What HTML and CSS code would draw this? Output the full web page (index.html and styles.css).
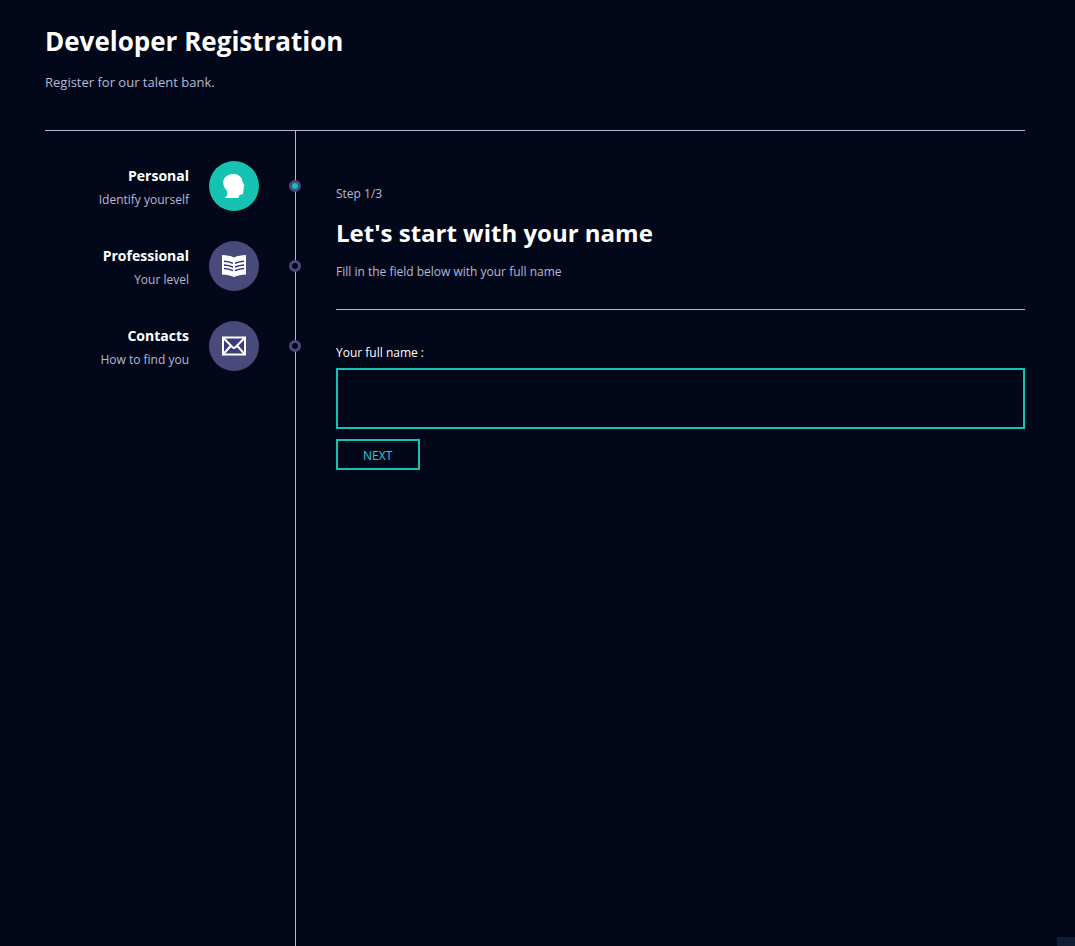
FILE: index.html
```html
<!DOCTYPE html>
<html lang="en">
<head>
<meta charset="utf-8">
<meta name="viewport" content="width=device-width, initial-scale=1">
<title>Developer Registration</title>
<link rel="stylesheet" href="styles.css">
</head>
<body>
<div class="container">
  <header class="header">
    <h1 class="header-title">Developer Registration</h1>
    <p class="header-text">Register for our talent bank.</p>
  </header>
  <div class="steps">
    <nav class="sidebar" aria-label="Steps">
      <a class="item active" href="#personal">
        <span class="info"><strong class="item-title">Personal</strong><span class="item-text">Identify yourself</span></span>
        <span class="icon">
          <svg viewBox="0 0 24 24" width="24" height="24" fill="#fff" aria-hidden="true"><path d="M11 0C5.500 0 1.200 3.600 1.200 8.600c0 3.600 1.800 6.400 4 8.400.8 2.800 0 5-2.400 7h13.600l1.200-3.200 3-.6.8-2.400-.2-2 .8-1-.4-2.200 1-.8-2-3.600C20.400 3.300 16.600 0 11 0z"/></svg>
        </span>
        <span class="point"></span>
      </a>
      <a class="item" href="#professional">
        <span class="info"><strong class="item-title">Professional</strong><span class="item-text">Your level</span></span>
        <span class="icon">
          <svg viewBox="0 0 24 24" width="24" height="24" aria-hidden="true"><path fill="#fff" d="M0 1c4.500.1 8.500.8 12 2.400C15.500 1.800 19.500 1.100 24 1v19.500c-4.500.1-8.500.8-12 2.500-3.500-1.700-7.500-2.400-12-2.500z"/><path fill="none" stroke="#2f2f78" stroke-width="1.500" d="M2 7.300q4.800.2 9 2.100M2 10.900q4.800.2 9 2.100M2 14.500q4.800.2 9 2.100M22 7.300q-4.800.2-9 2.100M22 10.900q-4.800.2-9 2.100M22 14.500q-4.800.2-9 2.100"/></svg>
        </span>
        <span class="point"></span>
      </a>
      <a class="item" href="#contacts">
        <span class="info"><strong class="item-title">Contacts</strong><span class="item-text">How to find you</span></span>
        <span class="icon">
          <svg viewBox="0 0 24 24" width="24" height="24" fill="none" stroke="#fff" stroke-width="2" aria-hidden="true"><path fill="#3c3c7a" d="M1 3.500h22v17H1z"/><path d="M2 4.500l8.500 8.800q1.500 1.200 3 0L22 4.500M2 19.500l7-8M22 19.500l-7-8"/></svg>
        </span>
        <span class="point"></span>
      </a>
    </nav>
    <main class="content">
      <p class="text">Step 1/3</p>
      <h2 class="title">Let's start with your name</h2>
      <p class="text">Fill in the field below with your full name</p>
      <hr class="divider">
      <form class="form">
        <label class="label" for="name">Your full name :</label>
        <input class="field" id="name" type="text">
        <button class="next" type="button">NEXT</button>
      </form>
    </main>
  </div>
</div>
<div class="corner" aria-hidden="true"></div>
</body>
</html>
```
FILE: styles.css
```css
* {
  box-sizing: border-box;
  margin: 0;
  padding: 0;
}

body {
  background: #02081a;
  color: #fff;
  font-family: "Segoe UI", "Open Sans", "Noto Sans", sans-serif;
  font-size: 12px;
}

.container {
  display: flex;
  flex-direction: column;
  min-height: 100vh;
  padding: 0 50px 0 45px;
}

.header {
  padding: 20px 0 38px;
  border-bottom: 1px solid #b8b8d4;
}

.header-title {
  font-size: 26px;
  line-height: 42px;
}

.header-text {
  margin-top: 10px;
  font-size: 13px;
  line-height: 20px;
  color: #b8b8d4;
}

.steps {
  display: flex;
  flex: 1;
}

.sidebar {
  display: flex;
  flex-direction: column;
  flex: 0 0 251px;
  gap: 30px;
  padding-top: 30px;
  border-right: 1px solid #b8b8d4;
}

.item {
  position: relative;
  display: flex;
  align-items: center;
  justify-content: flex-end;
  gap: 20px;
  padding-right: 36px;
  color: inherit;
  text-decoration: none;
}

.info {
  display: flex;
  flex-direction: column;
  gap: 4px;
  padding-top: 3px;
  text-align: right;
  line-height: 20px;
}

.item-title {
  font-size: 14px;
}

.item-text {
  color: #b8b8d4;
}

.icon {
  display: flex;
  align-items: center;
  justify-content: center;
  width: 50px;
  height: 50px;
  border-radius: 50%;
  background: #494a7c;
}

.point {
  position: absolute;
  top: 19px;
  right: -6px;
  width: 12px;
  height: 12px;
  border: 3px solid #494a7c;
  border-radius: 50%;
  background: #02081a;
}

.active .icon,
.active .point {
  background-color: #16c3b3;
}

.content {
  flex: 1;
  min-width: 0;
  padding: 53px 0 40px 40px;
}

.text {
  line-height: 20px;
  color: #b8b8d4;
}

.title {
  margin: 9px 0 9px;
  font-size: 24px;
  line-height: 40px;
}

.divider {
  margin: 27px 0 33px;
  border: 0;
  border-top: 1px solid #b8b8d4;
}

.form {
  display: flex;
  flex-direction: column;
  align-items: flex-start;
}

.label {
  margin-bottom: 5px;
  line-height: 20px;
}

.field {
  width: 100%;
  height: 61px;
  margin-bottom: 10px;
  padding: 0 20px;
  border: 2px solid #16c3b3;
  background: transparent;
  color: #fff;
  font: inherit;
}

.next {
  padding: 5px 26px 3px 25px;
  border: 2px solid #16c3b3;
  background: transparent;
  color: #25cde3;
  font-family: inherit;
  font-size: 12px;
  line-height: 19px;
  cursor: pointer;
}

.corner {
  position: fixed;
  right: 0;
  bottom: 0;
  width: 18px;
  height: 9px;
  background: #101d33;
}
```
